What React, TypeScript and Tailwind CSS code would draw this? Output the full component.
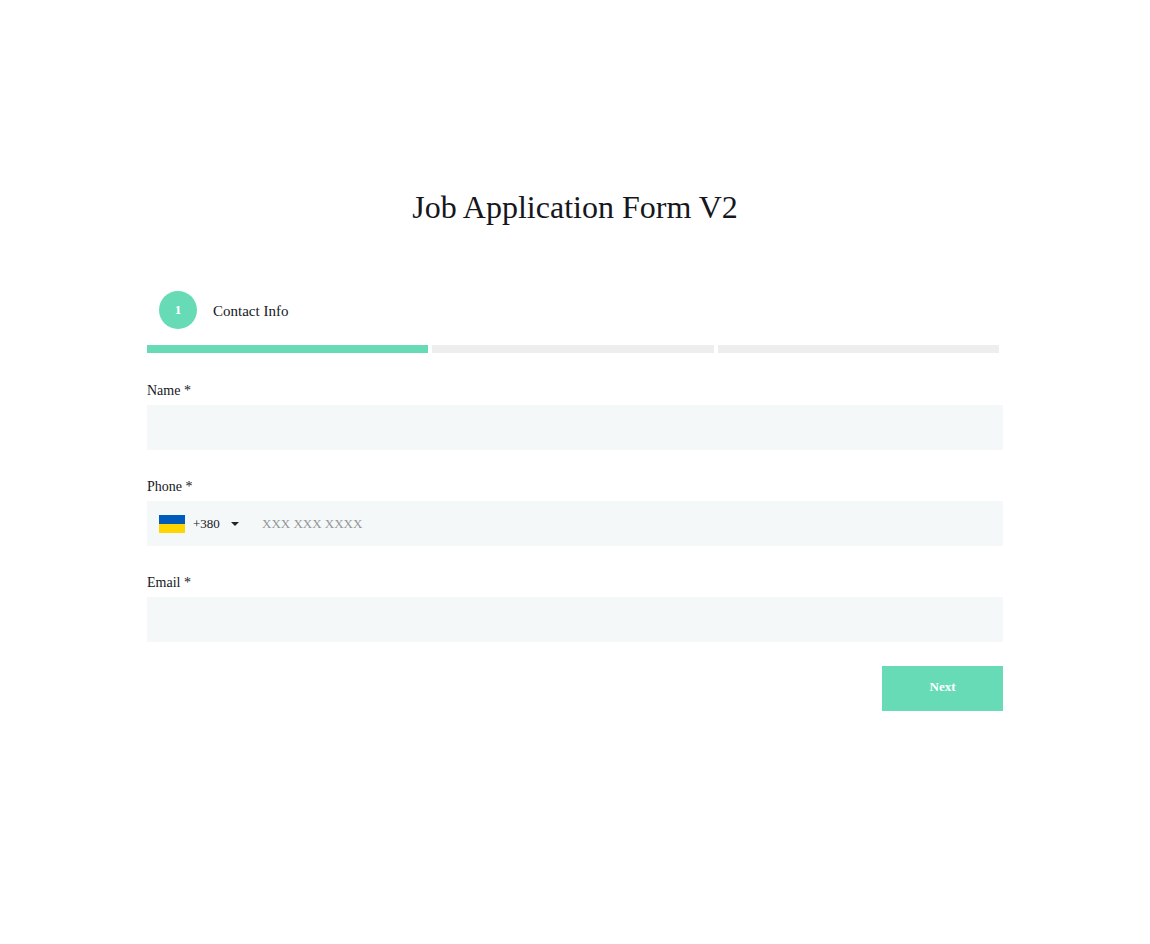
import React, { useState } from "react";

const steps = ["Contact Info", "Experience", "Documents"];

type FieldProps = { id: string; label: string; children: React.ReactNode };

function Field({ id, label, children }: FieldProps) {
  return (
    <div className="mb-6">
      <label htmlFor={id} className="mb-0.5 block text-sm leading-[25px]">
        {label} *
      </label>
      {children}
    </div>
  );
}

function UkraineFlag() {
  return (
    <svg width="26" height="18" viewBox="0 0 26 18" aria-hidden="true" className="shrink-0">
      <rect width="26" height="9" fill="#005bbb" />
      <rect y="9" width="26" height="9" fill="#ffd500" />
    </svg>
  );
}

export default function App() {
  const [current] = useState(0);

  return (
    <main className="min-h-screen bg-white px-6 pt-[183px] pb-12 font-['Liberation_Serif',serif] text-[#15171c]">
      <form className="mx-auto max-w-[856px]" onSubmit={(e) => e.preventDefault()}>
        <h1 className="mb-[60px] text-center text-[32px] leading-[48px]">Job Application Form V2</h1>

        <div className="mb-4 flex items-center gap-4 px-3">
          <span className="flex size-[38px] items-center justify-center rounded-full bg-[#67dbb6] text-[13px] font-bold text-white">
            {current + 1}
          </span>
          <span className="pt-0.5 text-[15px] leading-6">{steps[current]}</span>
        </div>

        <div className="mb-[25px] flex">
          {steps.map((step, i) => (
            <div key={step} className={`mr-1 h-2 flex-1 ${i <= current ? "bg-[#67dbb6]" : "bg-[#eeeeee]"}`} />
          ))}
        </div>

        <Field id="name" label="Name">
          <input id="name" type="text" className="block h-[45px] w-full bg-[#f4f8f9] px-3 text-sm outline-none" />
        </Field>

        <Field id="phone" label="Phone">
          <div className="flex h-[45px] items-center bg-[#f4f8f9] px-3">
            <button type="button" aria-label="Country code +380" className="flex shrink-0 items-center">
              <UkraineFlag />
              <span className="ml-2 w-[38px] text-left text-[13px]">+380</span>
              <svg width="8" height="4" viewBox="0 0 8 4" aria-hidden="true">
                <path d="M0 0h8L4 4z" fill="#212529" />
              </svg>
            </button>
            <input
              id="phone"
              type="tel"
              placeholder="XXX XXX XXXX"
              className="ml-[23px] h-full min-w-0 flex-1 bg-transparent text-[13px] outline-none placeholder:text-[#939697]"
            />
          </div>
        </Field>

        <Field id="email" label="Email">
          <input id="email" type="email" className="block h-[45px] w-full bg-[#f4f8f9] px-3 text-sm outline-none" />
        </Field>

        <div className="flex justify-end">
          <button type="submit" className="h-[45px] w-[121px] bg-[#67dbb6] pb-1 text-[13px] font-bold text-white">
            Next
          </button>
        </div>
      </form>
    </main>
  );
}
